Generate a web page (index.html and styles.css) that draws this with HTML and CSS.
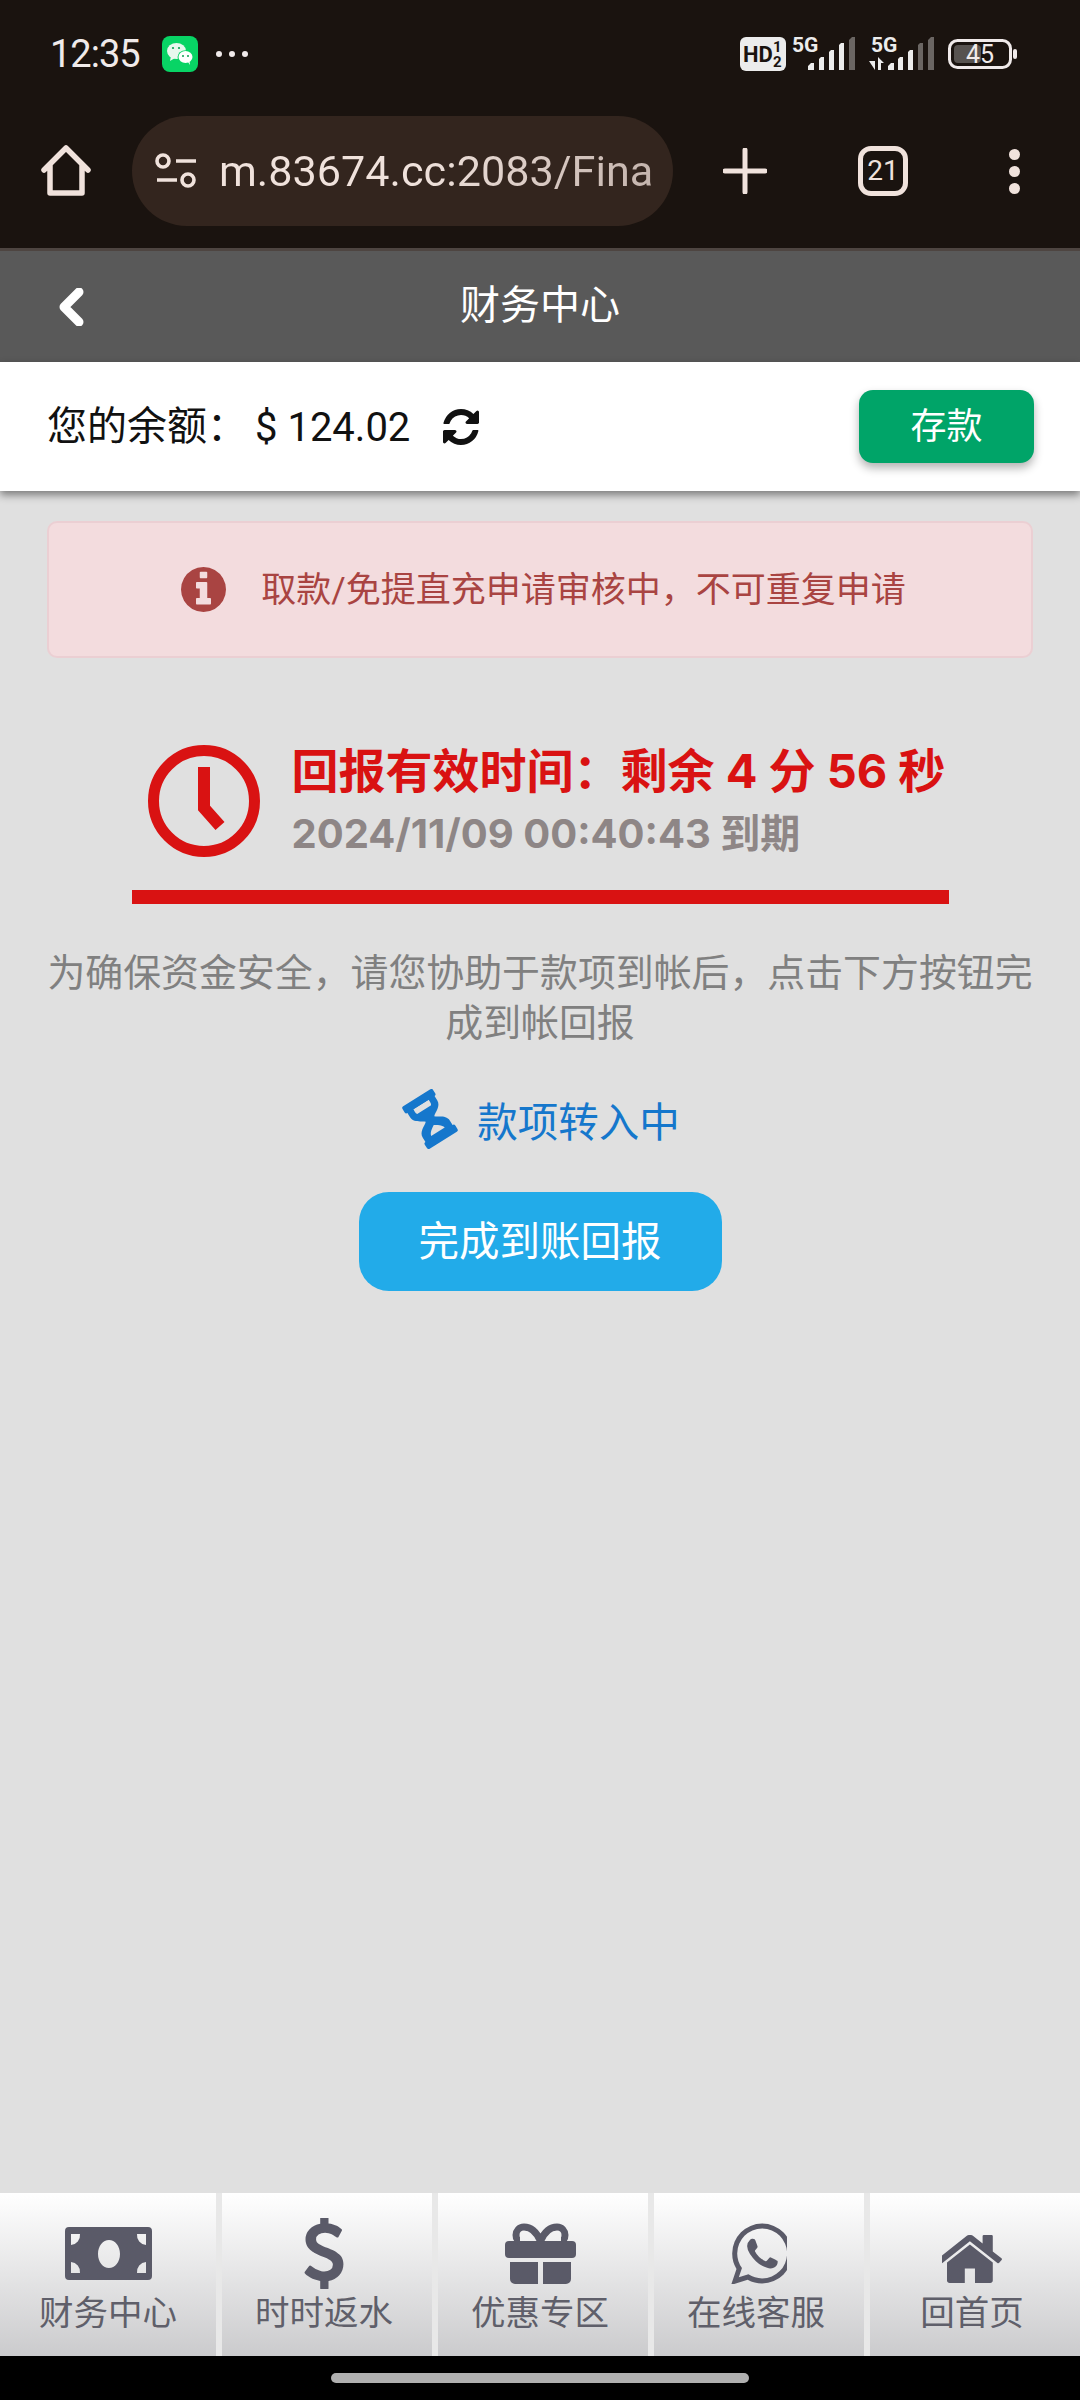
FILE: index.html
```html
<!DOCTYPE html>
<html lang="zh-CN">
<head>
    <meta charset="utf-8">
    <title>财务中心</title>
    <link rel="stylesheet" href="styles.css">
</head>
<body>
<div class="page">
    <div class="chrome">
        <div class="status">
            <span class="time">12:35</span>
            <svg class="wechat" viewBox="0 0 36 36">
                <rect width="36" height="36" rx="8" fill="#08d465"/>
                <ellipse cx="14.5" cy="15" rx="9.5" ry="8" fill="#e8f8ee"/>
                <path d="M9 20l-1 5 5-3z" fill="#e8f8ee"/>
                <ellipse cx="23.5" cy="21" rx="8" ry="6.8" fill="#08d465"/>
                <ellipse cx="23.5" cy="21" rx="7" ry="6" fill="#fff"/>
                <path d="M26 26l2 3-.5-4z" fill="#fff"/>
                <circle cx="11" cy="12" r="1.1" fill="#08a050"/>
                <circle cx="17" cy="12" r="1.1" fill="#08a050"/>
                <circle cx="21" cy="20" r="1" fill="#08a050"/>
                <circle cx="26" cy="20" r="1" fill="#08a050"/>
            </svg>
            <span class="more-dots"><i></i><i></i><i></i></span>
            <div class="status-right">
                <svg class="hd" viewBox="0 0 46 34">
                    <rect width="46" height="34" rx="6" fill="#ececec"/>
                    <text x="3" y="25" class="hd-text">HD</text>
                    <text x="33" y="15" class="hd-num">1</text>
                    <text x="33" y="30" class="hd-num">2</text>
                </svg>
                <svg class="signal first" viewBox="0 -8 64 42">
                    <text x="0" y="16" class="g5">5G</text>
                    <path d="M16 34v-4l3-3h3v7zM27 34V23l2-2h3v13zM37 34V16l2-2h3v20zM47 34V9l2-2h3v27z" fill="#ececec"/>
                    <path d="M57 34V4l3-3h3v33z" fill="#6b6663"/>
                </svg>
                <svg class="signal second" viewBox="0 -8 66 42">
                    <text x="3" y="16" class="g5">5G</text>
                    <path d="M7 21v4H1l6 9zM10 34V21l6 6h-3v7z" fill="#ececec"/>
                    <path d="M20 34v-4l3-3h3v7zM30 34V23l2-2h3v13zM40 34V16l2-2h3v20z" fill="#ececec"/>
                    <path d="M50 34V9l2-2h3v27zM60 34V4l3-3h3v33z" fill="#6b6663"/>
                </svg>
                <svg class="battery" viewBox="0 0 70 30">
                    <rect x="1.5" y="1.5" width="61" height="27" rx="8" fill="none" stroke="#f0eaea" stroke-width="3"/>
                    <rect x="6" y="6" width="27" height="18" rx="4" fill="#57524f"/>
                    <text x="32" y="24" class="batt-num" text-anchor="middle">45</text>
                    <rect x="65" y="10" width="4" height="10" rx="2" fill="#f0eaea"/>
                </svg>
            </div>
        </div>
        <div class="toolbar">
            <svg class="home-btn" viewBox="0 0 50 52">
                <path d="M3 25L25 3l22 22M9 20v28h32V20" fill="none" stroke="#f0e2dc" stroke-width="5.5" stroke-linecap="round" stroke-linejoin="round"/>
            </svg>
            <div class="url-bar">
                <svg class="tune" viewBox="0 0 42 36">
                    <circle cx="8" cy="8" r="6" fill="none" stroke="#f0e2dc" stroke-width="3.6"/>
                    <path d="M21 8h20M2 27h20" stroke="#f0e2dc" stroke-width="3.6"/>
                    <circle cx="33" cy="27" r="6" fill="none" stroke="#f0e2dc" stroke-width="3.6"/>
                </svg>
                <span class="url-text">m.83674.cc:2083/Fina</span>
            </div>
            <svg class="plus-btn" viewBox="0 0 44 46">
                <path d="M22 2v42M2 23h40" stroke="#f0e2dc" stroke-width="5" stroke-linecap="round"/>
            </svg>
            <div class="tab-count">21</div>
            <div class="menu-dots"><i></i><i></i><i></i></div>
        </div>
    </div>

    <header class="title-bar">
        <svg class="back" viewBox="0 0 26 38">
            <path d="M21 4L6 19l15 15" fill="none" stroke="#fff" stroke-width="9" stroke-linejoin="round" stroke-linecap="round"/>
        </svg>
        <h1>财务中心</h1>
    </header>

    <div class="balance-row">
        <div class="balance">
            <span class="balance-label">您的余额：</span>
            <span class="amount">$ 124.02</span>
            <svg class="refresh" viewBox="128 128 1536 1536"><path d="M1639 1056q0 5-1 7-64 268-268 434.5t-478 166.5q-146 0-282.5-55t-243.5-157l-129 129q-19 19-45 19t-45-19-19-45v-448q0-26 19-45t45-19h448q26 0 45 19t19 45-19 45l-137 137q71 66 161 102t187 36q134 0 250-65t186-179q11-17 53-117 8-23 30-23h192q13 0 22.5 9.5t9.5 22.5zm25-800v448q0 26-19 45t-45 19h-448q-26 0-45-19t-19-45 19-45l138-138q-148-137-349-137-134 0-250 65t-186 179q-11 17-53 117-8 23-30 23h-199q-13 0-22.5-9.5t-9.5-22.5v-7q65-268 270-434.5t480-166.5q146 0 284 55.5t245 156.5l130-129q19-19 45-19t45 19 19 45z"/></svg>
        </div>
        <button class="deposit">存款</button>
    </div>

    <main class="content">
        <div class="alert">
            <svg class="alert-icon" viewBox="128 128 1536 1536"><path d="M1152 1376v-160q0-14-9-23t-23-9h-96v-512q0-14-9-23t-23-9h-320q-14 0-23 9t-9 23v160q0 14 9 23t23 9h96v320h-96q-14 0-23 9t-9 23v160q0 14 9 23t23 9h448q14 0 23-9t9-23zm-128-896v-160q0-14-9-23t-23-9h-192q-14 0-23 9t-9 23v160q0 14 9 23t23 9h192q14 0 23-9t9-23zm640 416q0 209-103 385.5t-279.5 279.5-385.5 103-385.5-103-279.5-279.5-103-385.5 103-385.5 279.5-279.5 385.5-103 385.5 103 279.5 279.5 103 385.5z"/></svg>
            <span class="alert-text">取款/免提直充申请审核中，不可重复申请</span>
        </div>

        <div class="timer">
            <svg class="clock" viewBox="0 0 112 112">
                <circle cx="56" cy="56" r="50.5" fill="none" stroke="#d91212" stroke-width="11"/>
                <path d="M56 22v41l16 18" fill="none" stroke="#d91212" stroke-width="12"/>
            </svg>
            <div class="timer-text">
                <div class="timer-title">回报有效时间：剩余 4 分 56 秒</div>
                <div class="timer-date">2024/11/09 00:40:43 到期</div>
            </div>
        </div>
        <div class="timer-line"></div>

        <p class="note">为确保资金安全，请您协助于款项到帐后，点击下方按钮完成到帐回报</p>

        <div class="pending">
            <svg class="hourglass" viewBox="0 0 60 60">
                <g transform="rotate(-32 30 30)">
                    <rect x="12" y="5" width="36" height="8" rx="2" fill="#1577cc"/>
                    <rect x="12" y="47" width="36" height="8" rx="2" fill="#1577cc"/>
                    <path fill="#1577cc" fill-rule="evenodd" d="M14 10h32v8c0 7-8 9-11 12 3 3 11 5 11 12v8H14v-8c0-7 8-9 11-12-3-3-11-5-11-12zM21 13v3c0 1 .2 2 .8 3h16.400c.6-1 .8-2 .8-3v-3zM22 45c1-4 5-6 8-8 3 2 7 4 8 8z"/>
                </g>
            </svg>
            <span>款项转入中</span>
        </div>

        <button class="finish">完成到账回报</button>
    </main>

    <nav class="tabbar">
        <a class="tab">
            <svg class="ico-money" viewBox="0 0 87 53"><path fill-rule="evenodd" d="M4 0h79a4 4 0 0 1 4 4v45a4 4 0 0 1-4 4H4a4 4 0 0 1-4-4V4a4 4 0 0 1 4-4zM6 7v11a10 10 0 0 0 9-11zM81 7v11a10 10 0 0 1-9-11zM6 46V35a10 10 0 0 1 9 11zM81 46V35a10 10 0 0 0-9 11zM44 13c-6 0-11 6-11 14s5 14 11 14 11-6 11-14-5-14-11-14z"/></svg>
            <span>财务中心</span>
        </a>
        <a class="tab">
            <svg class="ico-dollar" viewBox="32 96 960 1664"><path d="M978 1185q0 153-99.500 263.500t-258.500 136.500v175q0 14-9 23t-23 9h-135q-13 0-22.500-9.500t-9.500-22.500v-175q-66-9-127.500-31t-101.500-44.500-74-48-46.500-37.500-17.500-18q-17-21-2-41l103-135q7-10 23-12 15-2 24 9l2 2q113 99 243 125 37 8 74 8 81 0 142.500-43t61.500-122q0-28-15-53t-33.500-42-58.500-37.500-66-32-80-32.500q-39-16-61.500-25t-61.500-26.500-62.500-31-56.500-35.500-53.500-42.500-43.500-49-35.500-58-21-66.500-8.500-78q0-138 98-242t255-134v-180q0-13 9.500-22.500t22.500-9.500h135q14 0 23 9t9 23v176q57 6 110.500 23t87 33.500 63.500 37.500 39 29 15 14q17 18 5 38l-81 146q-8 15-23 16-14 3-27-7-3-3-14.500-12t-39-26.500-58.500-32-74.500-26-85.500-11.500q-95 0-155 43t-60 111q0 26 8.500 48t29.500 41.500 39.500 33 56 31 60.500 27 70 27.500q53 20 81 31.500t76 35 75.500 42.500 62 50 53 63.500 31.500 76.500 13 94z"/></svg>
            <span>时时返水</span>
        </a>
        <a class="tab">
            <svg class="ico-gift" viewBox="0 0 71 61">
                <rect x="0" y="18" width="71" height="17" rx="4"/>
                <path d="M5 39h28v22H10a5 5 0 0 1-5-5zM38 39h28v17a5 5 0 0 1-5 5H38z"/>
                <path d="M35.500 18C32 10 27 4 19 4c-5 0-8 4-8 8s2 6 4 6M35.500 18C39 10 44 4 52 4c5 0 8 4 8 8s-2 6-4 6" fill="none" stroke="#5a5a68" stroke-width="7"/>
            </svg>
            <span>优惠专区</span>
        </a>
        <a class="tab">
            <svg class="ico-whatsapp" viewBox="0 122 1536 1510"><path d="M1113 974q13 0 97.500 44t89.500 53q2 5 2 15 0 33-17 76-16 39-71 65.500t-102 26.500q-57 0-190-62-98-45-170-118t-148-185q-72-107-71-194v-8q3-91 74-158 24-22 52-22 6 0 18 1.500t19 1.500q19 0 26.500 6.500t15.500 27.500q8 20 33 88t25 75q0 21-34.500 57.500t-34.500 46.500q0 7 5 15 34 73 102 137 56 53 151 101 12 7 22 7 15 0 54-48.500t52-48.500zm-203 530q127 0 243.500-50t200.500-134 134-200.500 50-243.500-50-243.500-134-200.500-200.500-134-243.500-50-243.500 50-200.500 134-134 200.500-50 243.500q0 203 120 368l-79 233 242-77q158 104 345 104zm0-1382q153 0 292.500 60t240.500 161 161 240.500 60 292.500-60 292.500-161 240.500-240.500 161-292.500 60q-195 0-365-94l-417 134 136-405q-108-178-108-389 0-153 60-292.500t161-240.500 240.500-161 292.500-60z"/></svg>
            <span>在线客服</span>
        </a>
        <a class="tab">
            <svg class="ico-home" viewBox="130 256 1510 1280" preserveAspectRatio="none"><path d="M1408 992v480q0 26-19 45t-45 19h-384v-384h-256v384h-384q-26 0-45-19t-19-45v-480q0-1 .5-3t.5-3l575-474 575 474q1 2 1 6zm223-69l-62 74q-8 9-21 11h-3q-13 0-21-7l-692-577-692 577q-12 8-24 7-13-2-21-11l-62-74q-8-10-7-23.500t11-21.500l719-599q32-26 76-26t76 26l244 204v-195q0-14 9-23t23-9h192q14 0 23 9t9 23v408l219 182q10 8 11 21.500t-7 23.500z"/></svg>
            <span>回首页</span>
        </a>
    </nav>

    <div class="gesture"><div class="gesture-pill"></div></div>
</div>
</body>
</html>
```

FILE: styles.css
```css
* {
    box-sizing: border-box;
}

body {
    margin: 0;
    font-family: Roboto, "Noto Sans CJK SC", sans-serif;
}

.page {
    width: 1080px;
    height: 2400px;
    display: flex;
    flex-direction: column;
    background: #e0e0e0;
    overflow: hidden;
}

/* browser chrome */
.chrome {
    height: 251px;
    background: #1a130f;
    border-bottom: 3px solid #4e4541;
    flex-shrink: 0;
}

.status {
    height: 116px;
    display: flex;
    align-items: flex-start;
    padding: 36px 0 0 50px;
}

.time {
    color: #f0eaea;
    font-size: 38px;
    line-height: 36px;
    letter-spacing: -1px;
    width: 112px;
}

.wechat {
    width: 36px;
    height: 36px;
}

.more-dots {
    display: flex;
    gap: 7px;
    margin: 15px 0 0 18px;
}

.more-dots i {
    width: 6px;
    height: 6px;
    border-radius: 50%;
    background: #f0eaea;
}

.status-right {
    margin-left: auto;
    padding-right: 62px;
    display: flex;
    align-items: flex-start;
}

.hd {
    width: 46px;
    height: 34px;
    margin-top: 1px;
}

.hd-text {
    font: 700 22px Roboto, sans-serif;
    fill: #1a130f;
}

.hd-num {
    font: 700 15px Roboto, sans-serif;
    fill: #1a130f;
}

.signal {
    height: 42px;
    margin-top: -8px;
}

.signal.first {
    width: 64px;
    margin-left: 6px;
}

.signal.second {
    width: 66px;
    margin-left: 12px;
}

.g5 {
    font: 700 21px Roboto, sans-serif;
    fill: #ececec;
}

.battery {
    width: 70px;
    height: 30px;
    margin: 3px 0 0 14px;
}

.batt-num {
    font: 400 25px Roboto, sans-serif;
    fill: #f0eaea;
}

.toolbar {
    height: 110px;
    display: flex;
    align-items: center;
}

.home-btn {
    width: 50px;
    height: 52px;
    margin-left: 41px;
}

.url-bar {
    width: 541px;
    height: 110px;
    margin-left: 41px;
    border-radius: 55px;
    background: #33251e;
    display: flex;
    align-items: center;
    padding-left: 23px;
    overflow: hidden;
}

.tune {
    width: 42px;
    height: 36px;
    flex-shrink: 0;
}

.url-text {
    margin-left: 22px;
    font-size: 43.2px;
    white-space: nowrap;
    color: transparent;
    background: linear-gradient(90deg, #f0e2dc 45%, #c4b4ad 100%);
    -webkit-background-clip: text;
    background-clip: text;
}

.plus-btn {
    width: 44px;
    height: 46px;
    margin-left: 50px;
}

.tab-count {
    width: 50px;
    height: 50px;
    margin-left: 91px;
    border: 5px solid #f0e2dc;
    border-radius: 13px;
    color: #f0e2dc;
    font-size: 28px;
    line-height: 40px;
    text-align: center;
}

.menu-dots {
    margin-left: 101px;
    display: flex;
    flex-direction: column;
    gap: 6px;
}

.menu-dots i {
    width: 11px;
    height: 11px;
    border-radius: 50%;
    background: #f0e2dc;
}

/* page title */
.title-bar {
    height: 111px;
    background: #595959;
    flex-shrink: 0;
    display: grid;
    grid-template-columns: 1fr auto 1fr;
    align-items: center;
    padding: 0 58px;
}

.title-bar h1 {
    margin: 0 0 10px;
    color: #fff;
    font-size: 40px;
    font-weight: 400;
}

.back {
    width: 26px;
    height: 38px;
}

.balance-row {
    height: 129px;
    background: #fff;
    flex-shrink: 0;
    display: flex;
    align-items: center;
    justify-content: space-between;
    padding: 0 46px 0 47px;
    box-shadow: 0 4px 8px rgba(0, 0, 0, 0.45);
    position: relative;
}

.balance {
    display: flex;
    align-items: center;
    font-size: 40px;
    color: #111;
}

.balance-label {
    margin-bottom: 8px;
}

.amount {
    margin: 2px 0 0 8px;
}

.refresh {
    width: 36px;
    height: 36px;
    margin-left: 33px;
    fill: #111;
}

.deposit {
    width: 175px;
    height: 73px;
    padding: 0 0 8px;
    border: 0;
    border-radius: 14px;
    background: #00a468;
    color: #fff;
    font-family: inherit;
    font-size: 36px;
    box-shadow: 0 5px 10px rgba(0, 0, 0, 0.3);
}

/* main area */
.content {
    flex: 1;
    padding: 30px 47px 0;
    display: flex;
    flex-direction: column;
    align-items: center;
}

.alert {
    width: 100%;
    height: 137px;
    display: flex;
    align-items: center;
    justify-content: center;
    gap: 35px;
    padding-left: 7px;
    background: #f3dcde;
    border: 2px solid #ebcfd3;
    border-radius: 10px;
    color: #a94442;
    font-size: 35px;
}

.alert-text {
    margin-bottom: 6px;
}

.alert-icon {
    width: 45px;
    height: 45px;
    fill: #a94442;
}

.timer {
    margin-top: 87px;
    width: 817px;
    height: 112px;
    display: flex;
    align-items: center;
    padding-left: 16px;
    gap: 32px;
}

.clock {
    width: 112px;
    height: 112px;
    flex-shrink: 0;
}

.timer-title {
    color: #d91212;
    font-family: Inter, "Noto Sans CJK SC", sans-serif;
    font-size: 47px;
    font-weight: 700;
    line-height: 56px;
    white-space: nowrap;
}

.timer-date {
    padding-top: 10px;
    color: #8e8686;
    font-family: Inter, "Noto Sans CJK SC", sans-serif;
    font-size: 40px;
    font-weight: 700;
    line-height: 50px;
    white-space: nowrap;
}

.timer-line {
    width: 817px;
    height: 14px;
    margin-top: 33px;
    background: #d91212;
}

.note {
    margin: 44px 0 0;
    color: #808080;
    font-size: 37.9px;
    line-height: 50px;
    text-align: center;
}

.pending {
    margin-top: 41px;
    display: flex;
    align-items: center;
    gap: 17px;
    color: #1577cc;
    font-size: 40.5px;
}

.hourglass {
    width: 60px;
    height: 60px;
}

.finish {
    width: 363px;
    height: 99px;
    margin-top: 43px;
    padding: 0 0 6px;
    border: 0;
    border-radius: 30px;
    background: #22abe9;
    color: #fff;
    font-family: inherit;
    font-size: 40.5px;
}

/* bottom nav */
.tabbar {
    height: 163px;
    flex-shrink: 0;
    display: grid;
    grid-template-columns: repeat(5, 1fr);
}

.tab {
    height: 163px;
    display: flex;
    flex-direction: column;
    align-items: center;
    background: linear-gradient(#fff, #cbcbcd);
    color: #5f5f6a;
    font-size: 34.5px;
    position: relative;
}

.tab + .tab {
    box-shadow: inset 6px 0 0 #e8e8e8;
}

.tab svg {
    fill: #5a5a68;
    flex-shrink: 0;
}

.tab span {
    position: absolute;
    top: 97px;
    line-height: 46px;
}

.ico-money {
    width: 87px;
    height: 53px;
    margin-top: 34px;
}

.ico-dollar {
    width: 40px;
    height: 71px;
    margin-top: 25px;
}

.ico-gift {
    width: 71px;
    height: 61px;
    margin-top: 30px;
}

.ico-whatsapp {
    width: 61px;
    height: 61px;
    margin-top: 30px;
}

.ico-home {
    width: 60px;
    height: 48px;
    margin-top: 42px;
}

.gesture {
    height: 44px;
    flex-shrink: 0;
    background: #000;
    display: flex;
    justify-content: center;
    padding-top: 17px;
}

.gesture-pill {
    width: 418px;
    height: 10px;
    border-radius: 5px;
    background: #b0b0b0;
}
```
